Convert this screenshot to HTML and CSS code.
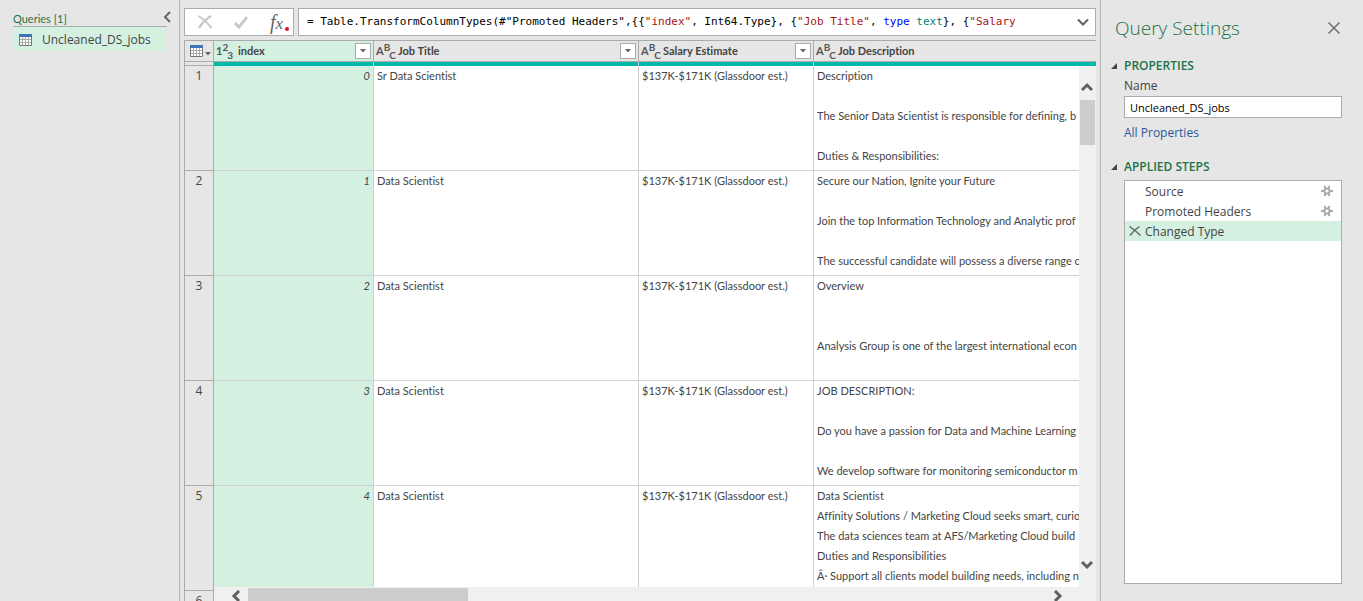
FILE: index.html
```html
<!DOCTYPE html>
<html lang="en">
<head>
<meta charset="utf-8">
<title>Power Query Editor</title>
<link rel="stylesheet" href="styles.css">
</head>
<body>
<svg class="defs" aria-hidden="true">
  <symbol id="table" viewBox="0 0 13 12"><path fill="#fff" d="M0 0h13v12H0z"/><path fill="#3e74b5" d="M0 0h13v3H0z"/><path fill="none" stroke="#777" d="M.5 3v8.500h12V3"/><path fill="none" stroke="#aaa" d="M1 5.500h11M1 8.500h11M3.500 3v8M6.500 3v8M9.500 3v8"/></symbol>
  <symbol id="gear" viewBox="0 0 12 12"><circle cx="6" cy="6" r="2.600" fill="none" stroke="#aaa" stroke-width="2"/><path stroke="#aaa" stroke-width="2" d="M0 6h3M9 6h3M3.500 .8l1 2.700M8.500 .8l-1 2.700M3.500 11.200l1-2.700M8.500 11.200l-1-2.700"/></symbol>
  <symbol id="arrow" viewBox="0 0 6 4"><path fill="#666" d="M0 0h6L3 3.500z"/></symbol>
  <symbol id="fold" viewBox="0 0 6 6"><path fill="#444" d="M6 0v6H0z"/></symbol>
  <symbol id="chevron" viewBox="0 0 12 12"><path fill="none" stroke="#606060" stroke-width="3" d="M1 9L6 4l5 5"/></symbol>
</svg>
<div class="app">
  <aside class="queries">
    <div class="queries-head">
      <h2>Queries [1]</h2>
      <button class="plain" aria-label="Collapse queries"><svg width="8" height="12" viewBox="0 0 8 12"><path fill="none" stroke="#666" stroke-width="2" d="M7 1L2 6l5 5"/></svg></button>
    </div>
    <button class="query"><svg width="13" height="12"><use href="#table"/></svg>Uncleaned_DS_jobs</button>
  </aside>

  <main class="editor">
    <div class="formula-row">
      <div class="formula-tools">
        <button class="plain" aria-label="Cancel"><svg width="16" height="14" viewBox="0 0 16 14"><path fill="none" stroke="#c8c8c8" stroke-width="2" d="M1.500 1Q8 5 14.500 13"/><path fill="none" stroke="#c8c8c8" stroke-width="2.400" d="M14 1Q7 5 2 13"/></svg></button>
        <button class="plain" aria-label="Accept"><svg width="14" height="13" viewBox="0 0 14 13"><path fill="none" stroke="#c8c8c8" stroke-width="2.800" d="M1 7l4 4.200L13 1"/></svg></button>
        <button class="plain fx" aria-label="Insert step"><i>f</i><i class="x">x</i><svg width="4" height="4" viewBox="0 0 4 4"><circle cx="2" cy="2" r="2" fill="#e81123"/></svg></button>
      </div>
      <div class="formula-box">
        <code class="formula" role="textbox" aria-label="Formula" contenteditable="true" spellcheck="false">= Table.TransformColumnTypes(#"Promoted Headers",{{<span class="str">"index"</span>, Int64.Type}, {<span class="str">"Job Title"</span>, <span class="kw">type</span> <span class="type">text</span>}, {<span class="str">"Salary</span></code>
        <button class="plain" aria-label="Expand formula bar"><svg class="down" width="12" height="12" viewBox="0 0 12 12"><path fill="none" stroke="#606060" stroke-width="2" d="M1 8.500L6 3.500l5 5"/></svg></button>
      </div>
    </div>

    <div class="grid">
      <table>
        <colgroup><col class="c-num"><col class="c-index"><col class="c-title"><col class="c-salary"><col></colgroup>
        <thead>
          <tr>
            <th><button class="plain corner" aria-label="Table menu"><svg width="13" height="12"><use href="#table"/></svg><svg width="6" height="4"><use href="#arrow"/></svg></button></th>
            <th class="selected"><div class="head"><span class="kind">1<sup>2</sup><sub>3</sub></span><span class="label">index</span><button class="filter" aria-label="Filter index"><svg width="6" height="4"><use href="#arrow"/></svg></button></div></th>
            <th><div class="head"><span class="kind">A<sup>B</sup><sub>C</sub></span><span class="label">Job Title</span><button class="filter" aria-label="Filter Job Title"><svg width="6" height="4"><use href="#arrow"/></svg></button></div></th>
            <th><div class="head"><span class="kind">A<sup>B</sup><sub>C</sub></span><span class="label">Salary Estimate</span><button class="filter" aria-label="Filter Salary Estimate"><svg width="6" height="4"><use href="#arrow"/></svg></button></div></th>
            <th><div class="head"><span class="kind">A<sup>B</sup><sub>C</sub></span><span class="label">Job Description</span></div></th>
          </tr>
          <tr class="quality"><td></td><td></td><td></td><td></td><td></td></tr>
        </thead>
        <tbody>
          <tr><th>1</th><td class="index">0</td><td>Sr Data Scientist</td><td>$137K-$171K (Glassdoor est.)</td><td><div class="text">Description

The Senior Data Scientist is responsible for defining, b

Duties &amp; Responsibilities:</div></td></tr>
          <tr><th>2</th><td class="index">1</td><td>Data Scientist</td><td>$137K-$171K (Glassdoor est.)</td><td><div class="text">Secure our Nation, Ignite your Future

Join the top Information Technology and Analytic prof

The successful candidate will possess a diverse range o</div></td></tr>
          <tr><th>3</th><td class="index">2</td><td>Data Scientist</td><td>$137K-$171K (Glassdoor est.)</td><td><div class="text">Overview


Analysis Group is one of the largest international econ</div></td></tr>
          <tr><th>4</th><td class="index">3</td><td>Data Scientist</td><td>$137K-$171K (Glassdoor est.)</td><td><div class="text">JOB DESCRIPTION:

Do you have a passion for Data and Machine Learning

We develop software for monitoring semiconductor m</div></td></tr>
          <tr><th>5</th><td class="index">4</td><td>Data Scientist</td><td>$137K-$171K (Glassdoor est.)</td><td><div class="text">Data Scientist
Affinity Solutions / Marketing Cloud seeks smart, curio
The data sciences team at AFS/Marketing Cloud build
Duties and Responsibilities
Â· Support all clients model building needs, including n</div></td></tr>
          <tr><th>6</th><td class="index"></td><td></td><td></td><td></td></tr>
        </tbody>
      </table>
      <div class="vscroll">
        <button class="plain" aria-label="Scroll up"><svg width="12" height="12"><use href="#chevron"/></svg></button>
        <div class="vthumb"></div>
        <button class="plain end" aria-label="Scroll down"><svg class="down" width="12" height="12"><use href="#chevron"/></svg></button>
      </div>
      <div class="hscroll">
        <button class="plain" aria-label="Scroll left"><svg class="left" width="12" height="12"><use href="#chevron"/></svg></button>
        <div class="hthumb"></div>
        <button class="plain end" aria-label="Scroll right"><svg class="right" width="12" height="12"><use href="#chevron"/></svg></button>
      </div>
    </div>
  </main>

  <aside class="settings">
    <header>
      <h1>Query Settings</h1>
      <button class="plain" aria-label="Close"><svg width="12" height="12" viewBox="0 0 12 12"><path stroke="#666" stroke-width="1.400" d="M.5.5l11 11M11.500.5l-11 11"/></svg></button>
    </header>
    <h2><svg width="6" height="6"><use href="#fold"/></svg>PROPERTIES</h2>
    <div class="properties">
      <label for="name">Name</label>
      <input id="name" type="text" value="Uncleaned_DS_jobs">
      <a href="#">All Properties</a>
    </div>
    <h2><svg width="6" height="6"><use href="#fold"/></svg>APPLIED STEPS</h2>
    <ul class="steps">
      <li><span class="mark"></span><span class="step">Source</span><button class="plain" aria-label="Edit Source"><svg width="12" height="12"><use href="#gear"/></svg></button></li>
      <li><span class="mark"></span><span class="step">Promoted Headers</span><button class="plain" aria-label="Edit Promoted Headers"><svg width="12" height="12"><use href="#gear"/></svg></button></li>
      <li class="current"><button class="plain mark" aria-label="Delete Changed Type"><svg width="12" height="10" viewBox="0 0 12 10"><path fill="none" stroke="#666" stroke-width="1.400" d="M.5.5Q6 4 11.500 9.500M10.500.5Q5 4 1 9.500"/></svg></button><span class="step">Changed Type</span></li>
    </ul>
  </aside>
</div>
</body>
</html>
```
FILE: styles.css
```css
* { box-sizing: border-box; }
body {
  margin: 0;
  background: #e6e6e6;
  color: #444;
  font: 12px/20px "Open Sans", "Noto Sans", sans-serif;
}
button, input { font: inherit; color: inherit; }
h1, h2, ul { margin: 0; padding: 0; font-weight: 400; }
svg { display: block; flex: none; }
.defs { position: absolute; width: 0; height: 0; }
.plain { border: 0; padding: 0; background: none; display: flex; align-items: center; justify-content: center; }
.down { transform: rotate(180deg); }
.left { transform: rotate(-90deg); }
.right { transform: rotate(90deg); }
.app { display: flex; height: 100vh; overflow: hidden; }

.queries { flex: none; width: 180px; padding: 10px 8px 0 13px; border-right: 1px solid #b4b4b4; }
.queries-head { display: flex; justify-content: space-between; height: 17px; }
.queries-head h2 { flex: 1; margin-right: 5px; border-bottom: 1px solid #ababab; color: #217346; font: 11px/18px Lato, sans-serif; }
.queries-head button { height: 13px; margin-left: -9px; }
.query {
  display: flex; align-items: center; gap: 10px;
  width: 152px; height: 24px; padding: 1px 0 0 6px;
  border: 0; background: #d4f0e1;
}

.editor { flex: 1; min-width: 0; display: flex; flex-direction: column; gap: 4px; padding: 8px 4px 0; }
.formula-row { display: flex; gap: 4px; height: 28px; flex: none; }
.formula-tools, .formula-box { display: flex; align-items: center; border: 1px solid #ababab; background: #fff; }
.formula-tools { width: 110px; padding: 0 4px 0 12px; justify-content: space-between; }
.fx { font: 20px/24px "Liberation Serif", serif; color: #666; }
.fx .x { font-size: 17px; padding-top: 4px; }
.fx svg { margin: 13px 0 0 2px; }
.formula-box { flex: 1; min-width: 0; padding: 0 6px 0 8px; }
.formula { flex: 1; overflow: hidden; white-space: pre; color: #000; font: 11px/20px "DejaVu Sans Mono", monospace; }
.str { color: #a31515; }
.kw { color: #00f; }
.type { color: #008080; }

.grid { position: relative; flex: 1; min-height: 0; overflow: hidden; border-top: 1px solid #ababab; border-left: 1px solid #ababab; }
table { width: 100%; table-layout: fixed; border-spacing: 0; font: 11px/20px Lato, "Open Sans", sans-serif; font-variant-ligatures: none; }
.c-num { width: 29px; }
.c-index { width: 160px; }
.c-title { width: 265px; }
.c-salary { width: 175px; }
th, td { padding: 0; border-right: 1px solid #d0d0d0; border-bottom: 1px solid #d0d0d0; overflow: hidden; white-space: nowrap; vertical-align: top; text-align: left; }
thead th { height: 21px; border-color: #ababab; vertical-align: middle; }
th:last-child, td:last-child { border-right: 0; }
.corner { gap: 2px; padding-left: 5px; }
.corner svg:last-child { margin-top: 6px; }
.head { display: flex; align-items: center; height: 20px; padding: 0 2px; }
.kind { display: flex; width: 22px; height: 20px; font-size: 11px; font-weight: 700; color: #555; }
.kind sup, .kind sub { font-size: 10px; line-height: 12px; }
.kind sub { padding-top: 8px; margin-left: -1px; }
.label { flex: 1; font-weight: 700; }
.filter { width: 16px; height: 16px; padding: 0; display: flex; align-items: center; justify-content: center; border: 1px solid #ababab; background: #fff; }
.quality td { height: 4px; border-bottom: 0; background: #01b8aa; }
.quality td:first-child { border-right-color: #ababab; border-bottom: 1px solid #ababab; background: #e6e6e6; }
tbody tr { height: 105px; }
tbody th { border-color: #ababab; text-align: center; font: 12px/20px "Open Sans", sans-serif; }
tbody td { padding: 0 3px; background: #fff; }
.selected, tbody .index { background: #d4f0e1; }
.index { text-align: right; font-style: italic; }
.text { height: 104px; overflow: hidden; white-space: pre; }
.vscroll { position: absolute; top: 25px; right: 0; bottom: 0; width: 17px; padding: 12px 0 23px; display: flex; flex-direction: column; background: #f0f0f0; }
.vscroll button { height: 18px; margin: 0 1px 4px 0; }
.vscroll .end { margin-top: auto; }
.vthumb { width: 15px; height: 45px; margin-left: 1px; background: #cdcdcd; }
.hscroll { position: absolute; left: 29px; right: 0; bottom: 0; height: 14px; padding: 1px 32px 0 16px; display: flex; background: #f0f0f0; }
.hscroll button { height: 15px; }
.hthumb { width: 220px; height: 13px; margin-left: 6px; background: #cdcdcd; }
.hscroll .end { margin-left: auto; }

.settings { flex: none; width: 263px; padding: 11px 21px 17px 10px; display: flex; flex-direction: column; border-left: 1px solid #b4b4b4; }
.settings header { display: flex; justify-content: space-between; align-items: center; height: 33px; padding: 0 2px 0 4px; }
h1 { color: #217346; font-size: 19px; font-weight: 300; line-height: 30px; }
.settings h2 { display: flex; align-items: center; gap: 7px; margin-top: 12px; color: #217346; font-size: 12px; font-weight: 600; }
.properties { display: flex; flex-direction: column; margin-left: 13px; }
.properties input { height: 22px; width: 100%; padding: 0 5px; border: 1px solid #ababab; background: #fff; color: #000; font-size: 11px; }
.properties a { margin-top: 5px; color: #2b579a; text-decoration: none; align-self: flex-start; }
.settings .properties + h2 { margin-top: 14px; }
.steps { flex: 1; margin: 3px 0 0 13px; list-style: none; border: 1px solid #ababab; background: #fff; }
.steps li { display: flex; align-items: center; height: 20px; padding: 0 8px 0 4px; }
.mark { width: 12px; margin-right: 4px; }
.step { flex: 1; padding-top: 2px; line-height: 18px; }
.steps .current { background: #d4f0e1; }
```
